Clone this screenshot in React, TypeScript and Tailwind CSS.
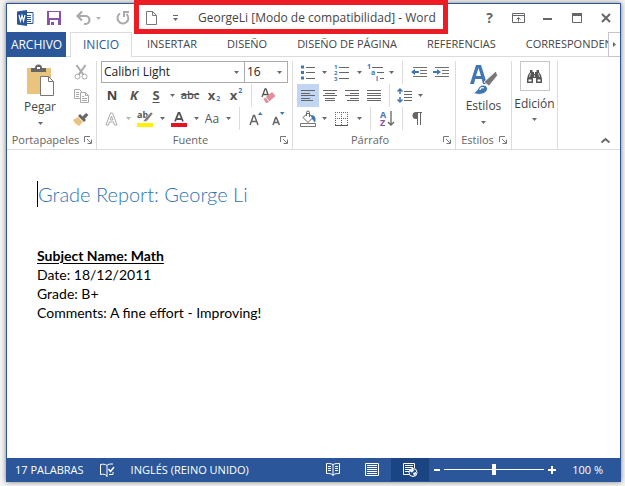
import React from "react";

type Kids = { children?: React.ReactNode };

function Svg({ w, h, children }: { w: number; h: number } & Kids) {
  return (
    <svg width={w} height={h} viewBox={`0 0 ${w} ${h}`} fill="none" aria-hidden="true" className="block shrink-0 overflow-visible">
      {children}
    </svg>
  );
}

function Caret({ className = "text-[#6a6a6a]" }: { className?: string }) {
  return (
    <span className={className}>
      <Svg w={5} h={3}>
        <path d="M0 0h5L2.500 3z" fill="currentColor" />
      </Svg>
    </span>
  );
}

function Tool({ label, className = "w-[22px]", children }: { label: string; className?: string } & Kids) {
  return (
    <button type="button" aria-label={label} title={label} className={`flex h-full shrink-0 items-center justify-center ${className}`}>
      {children}
    </button>
  );
}

function DropTool({ label, faded = false }: { label: string; faded?: boolean }) {
  return (
    <Tool label={label} className="w-[10px]">
      <Caret className={faded ? "text-[#b5b5b5]" : "text-[#6a6a6a]"} />
    </Tool>
  );
}

function Sep({ className = "w-2" }: { className?: string }) {
  return (
    <span className={`flex h-full shrink-0 justify-center ${className}`}>
      <span className="h-full w-px bg-[#dcdcdc]" />
    </span>
  );
}

function Row({ children }: Kids) {
  return <div className="flex h-[23px] items-center">{children}</div>;
}

function Launcher({ label }: { label: string }) {
  return (
    <button type="button" aria-label={label} className="shrink-0">
      <Svg w={8} h={8}>
        <path d="M.5 6V.5H6M3 3l4 4M7.500 3.500v4h-4" stroke="#777" />
      </Svg>
    </button>
  );
}

function Group({ title, className, launcher = true, children }: { title: string; className: string; launcher?: boolean } & Kids) {
  return (
    <section aria-label={title} className={`flex shrink-0 flex-col border-r border-[#dcdcdc] ${className}`}>
      <div className="h-[70px]">{children}</div>
      <div className="flex h-[18px] items-center pr-1">
        {launcher && (
          <>
            <h2 className="flex-1 text-center text-[11px] leading-4 text-[#666]">{title}</h2>
            <Launcher label={`Opciones de ${title}`} />
          </>
        )}
      </div>
    </section>
  );
}

function Bars({ rows }: { rows: [number, number][] }) {
  return (
    <Svg w={14} h={13}>
      {rows.map(([x, w], i) => (
        <path key={i} d={`M${x} ${[1, 4, 6, 9, 11][i] + 0.5}h${w}`} stroke="#666" />
      ))}
    </Svg>
  );
}

function IndentIcon({ out = false }: { out?: boolean }) {
  return (
    <Svg w={16} h={11}>
      <path d="M2 .5h14M9 3.500h7M9 6.500h7M2 9.500h14" stroke="#707070" />
      {out ? <path d="M0 5l4-3v2h4v2H4v2z" fill="#3f76b5" /> : <path d="M8 5L4 2v2H0v2h4v2z" fill="#3f76b5" />}
    </Svg>
  );
}

function TitleBar() {
  const control = "flex w-[29px] shrink-0 items-center justify-center";
  return (
    <header className="flex h-7 items-center text-[#666]">
      <div className="flex w-[139px] shrink-0 items-center pl-[10px]">
        <Svg w={17} h={16}>
          <path d="M9 2.500h7v11H9" fill="#fff" stroke="#2b579a" />
          <path d="M10 5.500h4M10 7.500h4M10 9.500h4M10 11.500h4" stroke="#2b579a" />
          <path d="M0 1.500L10 0v16L0 14.500z" fill="#2b579a" />
          <path d="M2 5l1.500 6L5 5.500 6.500 11 8 5" stroke="#fff" strokeWidth="1.200" />
        </Svg>
        <button type="button" aria-label="Guardar" className="ml-[13px]">
          <Svg w={14} h={14}>
            <path d="M0 0h14v14H0z" fill="#8a54a6" />
            <path d="M2 1h10v6H2zM3 9h8v5H3z" fill="#fff" />
            <path d="M4 11h3v3H4z" fill="#8a54a6" />
          </Svg>
        </button>
        <button type="button" aria-label="Deshacer" className="ml-[15px]">
          <Svg w={15} h={14}>
            <path d="M2 5h7.500a4 4 0 0 1 0 8H8" stroke="#aaa" strokeWidth="2.200" />
            <path d="M6 .5L1.500 5 6 9.500" stroke="#aaa" strokeWidth="2.200" />
          </Svg>
        </button>
        <button type="button" aria-label="Opciones de deshacer" className="ml-[5px]">
          <Caret className="text-[#b5b5b5]" />
        </button>
        <button type="button" aria-label="Rehacer" className="ml-[15px]">
          <Svg w={14} h={14}>
            <path d="M4 2.500A5.400 5.400 0 1 0 10.500 3" stroke="#aaa" strokeWidth="2" />
            <path d="M13 1H8v5" stroke="#aaa" strokeWidth="2" />
          </Svg>
        </button>
      </div>
      <button type="button" aria-label="Nuevo" className="shrink-0">
        <Svg w={12} h={14}>
          <path d="M.5.5h6l4 4v9H.5zM6.500.5v4h4" stroke="#777" fill="#fff" />
        </Svg>
      </button>
      <button type="button" aria-label="Personalizar barra" className="ml-[15px] flex shrink-0 flex-col items-center gap-[2px]">
        <span className="h-px w-[5px] bg-[#666]" />
        <Caret />
      </button>
      <h1 className="ml-5 min-w-0 flex-1 truncate text-[12px] leading-4 text-[#444]">GeorgeLi [Modo de compatibilidad] - Word</h1>
      <button type="button" aria-label="Ayuda" className={`text-[14px] leading-4 font-bold ${control}`}>?</button>
      <button type="button" aria-label="Opciones de presentación" className={control}>
        <Svg w={13} h={10}>
          <path d="M.5.5h12v9H.5zM.5 2.500h12M6.500 8.500V4.500M4.500 6.500l2-2 2 2" stroke="#666" />
        </Svg>
      </button>
      <button type="button" aria-label="Minimizar" className={control}>
        <Svg w={9} h={10}>
          <path d="M0 6h9" stroke="#666" strokeWidth="2" />
        </Svg>
      </button>
      <button type="button" aria-label="Maximizar" className={control}>
        <Svg w={10} h={10}>
          <path d="M.5 1v8.500h9V1" stroke="#666" />
          <path d="M0 1.500h10" stroke="#666" strokeWidth="3" />
        </Svg>
      </button>
      <button type="button" aria-label="Cerrar" className={control}>
        <Svg w={10} h={10}>
          <path d="M1 1l8 8M9 1L1 9" stroke="#666" strokeWidth="2" />
        </Svg>
      </button>
    </header>
  );
}

function Tabs() {
  const tab = "flex h-6 shrink-0 items-center text-[11px] leading-4 text-[#444]";
  return (
    <nav aria-label="Cinta" className="flex h-[25px] border-b border-[#dcdcdc]">
      <button type="button" className="flex h-[25px] w-[59px] shrink-0 items-center justify-center bg-[#2b579a] text-[12px] leading-4 text-white">ARCHIVO</button>
      <button type="button" className="ml-1 flex h-[25px] w-[62px] shrink-0 items-center justify-center border-x border-t border-[#dcdcdc] bg-white text-[12px] leading-4 text-[#2b579a]">
        INICIO
      </button>
      <div className="ml-[15px] flex min-w-0 flex-1 gap-[30px] overflow-hidden">
        <button type="button" className={tab}>INSERTAR</button>
        <button type="button" className={tab}>DISEÑO</button>
        <button type="button" className={tab}>DISEÑO DE PÁGINA</button>
        <button type="button" className={tab}>REFERENCIAS</button>
        <button type="button" className={tab}>CORRESPONDENCIA</button>
      </div>
      <button type="button" aria-label="Más pestañas" className="flex h-[25px] w-3 shrink-0 items-center justify-center border border-r-0 border-[#c6c6c6]">
        <Svg w={3} h={5}>
          <path d="M0 0v5l3-2.500z" fill="#666" />
        </Svg>
      </button>
    </nav>
  );
}

function Clipboard() {
  return (
    <Group title="Portapapeles" className="w-[90px]">
      <div className="flex">
        <button type="button" className="flex w-[66px] flex-col items-center pt-1 text-[12px] leading-4 text-[#444]">
          <Svg w={30} h={31}>
            <path d="M2 3h24v26H2z" fill="#e9c47e" />
            <path d="M6 3h4a3.500 3.500 0 0 1 7 0h4v4H6z" fill="#666" />
            <path d="M12 2h3v2h-3z" fill="#fff" />
            <path d="M15.500 11.500h8l5 5v14h-13z" fill="#fff" stroke="#777" />
            <path d="M23.500 11.500v5h5" stroke="#777" />
          </Svg>
          <span className="mt-[3px]">Pegar</span>
          <span className="mt-[7px]"><Caret /></span>
        </button>
        <div>
          <Row>
            <Tool label="Cortar" className="w-4">
              <Svg w={14} h={15}>
                <path d="M2.500 0L9.500 10M11.500 0L4.500 10" stroke="#aaa" strokeWidth="2" />
                <circle cx="3.500" cy="11.500" r="2.500" stroke="#aaa" />
                <circle cx="10.500" cy="11.500" r="2.500" stroke="#aaa" />
              </Svg>
            </Tool>
          </Row>
          <Row>
            <Tool label="Copiar" className="w-4">
              <Svg w={15} h={14}>
                <path d="M.5.5h5l2 2v7h-7zM2 3.500h3M2 5.500h3M2 7.500h3" stroke="#aaa" />
                <path d="M6.500 3.500h5l3 3v7h-8z" fill="#fff" stroke="#aaa" />
                <path d="M11.500 3.500v3h3M8 7.500h2M8 9.500h5M8 11.500h5" stroke="#aaa" />
              </Svg>
            </Tool>
          </Row>
          <Row>
            <Tool label="Copiar formato" className="w-4">
              <Svg w={16} h={14}>
                <path d="M0 8l5-3 5 5-4 4C4 13 1 11 0 8z" fill="#e9c47e" />
                <path d="M5 4l2-2 6 6-2 2z" fill="#666" />
                <path d="M9 5l4-4 2.500 2-4 4z" fill="#666" />
              </Svg>
            </Tool>
          </Row>
        </div>
      </div>
    </Group>
  );
}

function Font() {
  const select = "block h-5 w-full appearance-none bg-white pl-[2px] text-[12px] leading-4 text-[#222] outline-none";
  return (
    <Group title="Fuente" className="w-[196px] pl-1">
      <div className="mb-px flex h-[22px] w-[187px] border border-[#ababab]">
        <label className="relative flex-1">
          <select aria-label="Fuente" className={select}>
            <option>Calibri Light</option>
          </select>
          <span className="pointer-events-none absolute top-[9px] right-[5px]"><Caret /></span>
        </label>
        <label className="relative w-[43px] border-l border-[#ababab]">
          <select aria-label="Tamaño" className={select}>
            <option>16</option>
          </select>
          <span className="pointer-events-none absolute top-[9px] right-[5px]"><Caret /></span>
        </label>
      </div>
      <Row>
        <Tool label="Negrita"><b className="text-[13px] text-[#444]">N</b></Tool>
        <Tool label="Cursiva"><b className="text-[13px] text-[#555] italic">K</b></Tool>
        <Tool label="Subrayado"><b className="text-[13px] text-[#555] underline underline-offset-2">S</b></Tool>
        <DropTool label="Opciones de subrayado" />
        <Tool label="Tachado" className="w-[26px]"><span className="text-[11px] font-semibold text-[#555] line-through">abc</span></Tool>
        <Tool label="Subíndice">
          <b className="text-[13px] text-[#555]">x</b>
          <b className="mt-2 ml-px text-[7px] text-[#3f76b5]">2</b>
        </Tool>
        <Tool label="Superíndice">
          <b className="text-[13px] text-[#555]">x</b>
          <b className="mb-2 ml-px text-[7px] text-[#3f76b5]">2</b>
        </Tool>
        <Sep />
        <Tool label="Borrar formato" className="w-[26px]">
          <Svg w={15} h={15}>
            <path d="M1 9L4 1h1l3 8M2.500 6.500h4" stroke="#555" strokeWidth="1.300" />
            <path d="M2.500 11l8.500-7 3.500 4-8 7H5z" fill="#e58c9c" />
            <path d="M4.500 9l4 5" stroke="#fff" />
          </Svg>
        </Tool>
      </Row>
      <Row>
        <Tool label="Efectos de texto">
          <Svg w={14} h={14}>
            <path d="M1 13L5.500 1h2L12 13H9.500L8.500 10h-4l-1 3zM5.200 8h2.600L6.500 4z" stroke="#aaa" fill="#fff" />
          </Svg>
        </Tool>
        <DropTool label="Opciones de efectos" faded />
        <Tool label="Resaltado" className="w-[24px]">
          <Svg w={17} h={16}>
            <text x="0" y="7" fontSize="9" fontWeight="700" fill="#555">ab</text>
            <path d="M7 9l7-8 2 1.500-6 7.500-4 1z" fill="#777" stroke="#fff" strokeWidth=".6" />
            <path d="M0 12h16v4H0z" fill="#fff200" />
          </Svg>
        </Tool>
        <DropTool label="Color de resaltado" />
        <Tool label="Color de fuente" className="w-[24px]">
          <Svg w={16} h={16}>
            <path d="M4 10.500L7.500 2h1L12 10.500M5 8h6" stroke="#555" strokeWidth="1.800" />
            <path d="M0 12h16v4H0z" fill="#e81123" />
          </Svg>
        </Tool>
        <DropTool label="Opciones de color" />
        <Tool label="Cambiar mayúsculas"><span className="text-[12px] text-[#555]">Aa</span></Tool>
        <DropTool label="Opciones de mayúsculas" />
        <Sep className="w-3" />
        <Tool label="Agrandar fuente">
          <Svg w={14} h={14}>
            <path d="M1 13L4.500 3.500h1L9 13M2.500 9.500h5" stroke="#666" strokeWidth="1.500" />
            <path d="M9 3l2.200-3L13.500 3z" fill="#3f76b5" />
          </Svg>
        </Tool>
        <Tool label="Reducir fuente">
          <Svg w={13} h={14}>
            <path d="M1 13l2.700-7.500h.6L7.500 13M2 10.500h4.500" stroke="#666" strokeWidth="1.500" />
            <path d="M8 0h4.500L10.200 3z" fill="#3f76b5" />
          </Svg>
        </Tool>
      </Row>
    </Group>
  );
}

function Paragraph() {
  return (
    <Group title="Párrafo" className="w-[163px] pl-1">
      <Row>
        <Tool label="Viñetas">
          <Svg w={14} h={15}>
            <path d="M0 .5h3v3H0zM0 6h3v3H0zM0 11.500h3v3H0z" fill="#3f76b5" />
            <path d="M5 2.500h9M5 7.500h9M5 13.500h9" stroke="#666" />
          </Svg>
        </Tool>
        <DropTool label="Opciones de viñetas" />
        <Tool label="Numeración" className="w-[25px]">
          <Svg w={15} h={17}>
            <g fill="#3f76b5" fontSize="6" fontWeight="700">
              <text x="0" y="5">1</text>
              <text x="0" y="11">2</text>
              <text x="0" y="17">3</text>
            </g>
            <path d="M5 3.500h10M5 8.500h10M5 14.500h10" stroke="#666" />
          </Svg>
        </Tool>
        <DropTool label="Opciones de numeración" />
        <Tool label="Lista multinivel">
          <Svg w={17} h={17}>
            <g fill="#3f76b5" fontSize="7" fontWeight="700">
              <text x="0" y="5">1</text>
              <text x="4" y="11">a</text>
              <text x="9" y="17">i</text>
            </g>
            <path d="M5 3.500h11M10 8.500h7M13 14.500h4" stroke="#666" />
          </Svg>
        </Tool>
        <DropTool label="Opciones multinivel" />
        <Sep className="w-3" />
        <Tool label="Disminuir sangría"><IndentIcon out /></Tool>
        <Tool label="Aumentar sangría"><IndentIcon /></Tool>
      </Row>
      <Row>
        <Tool label="Alinear a la izquierda" className="w-[22px] bg-[#c2d5f2]">
          <Bars rows={[[0, 14], [0, 9], [0, 14], [0, 9], [0, 12]]} />
        </Tool>
        <Tool label="Centrar"><Bars rows={[[0, 14], [2, 10], [0, 14], [2, 10], [2, 10]]} /></Tool>
        <Tool label="Alinear a la derecha"><Bars rows={[[0, 14], [5, 9], [0, 14], [5, 9], [2, 12]]} /></Tool>
        <Tool label="Justificar"><Bars rows={[[0, 14], [0, 14], [0, 14], [0, 14], [0, 14]]} /></Tool>
        <Sep />
        <Tool label="Interlineado">
          <Svg w={15} h={15}>
            <path d="M3 1v5M3 9v5M.5 3.500L3 1l2.500 2.500M.5 11.500L3 14l2.500-2.500" stroke="#3f76b5" strokeWidth="1.500" />
            <path d="M7 3.500h8M7 6.500h8M7 9.500h8M7 12.500h8" stroke="#666" />
          </Svg>
        </Tool>
        <DropTool label="Opciones de interlineado" />
      </Row>
      <Row>
        <Tool label="Sombreado">
          <Svg w={17} h={16}>
            <path d="M3 6.500l5-4.500 5 4.500-5 5zM6.500 5V1.500a1.500 1.500 0 0 1 3 0V6" stroke="#666" fill="#fff" />
            <path d="M11 4c4 0 5.500 3 4 8-1-2-2-3-3-4z" fill="#3f76b5" />
            <path d="M.5 12.500h15v3H.5z" fill="#fff" stroke="#777" />
          </Svg>
        </Tool>
        <DropTool label="Opciones de sombreado" />
        <Tool label="Bordes" className="w-[25px]">
          <Svg w={14} h={14}>
            <path d="M0 .5h13M0 6.500h13M.5 0v13M6.500 0v13M12.500 0v13" stroke="#666" strokeDasharray="1 1" />
            <path d="M0 13.500h13" stroke="#555" />
          </Svg>
        </Tool>
        <DropTool label="Opciones de bordes" />
        <Sep className="w-3" />
        <Tool label="Ordenar">
          <Svg w={15} h={17}>
            <text x="0" y="8" fontSize="9" fontWeight="700" fill="#3f76b5">A</text>
            <text x="0" y="16" fontSize="9" fontWeight="700" fill="#8a54a6">Z</text>
            <path d="M11 1v14M8 12l3 3 3-3" stroke="#666" strokeWidth="1.300" />
          </Svg>
        </Tool>
        <Sep />
        <Tool label="Mostrar todo">
          <Svg w={10} h={13}>
            <path d="M4 0h6v1H9v12H8V1H6v12H5V7H4a3.500 3.500 0 0 1 0-7z" fill="#666" />
          </Svg>
        </Tool>
      </Row>
    </Group>
  );
}

function Ribbon() {
  return (
    <div className="flex h-[93px] border-b border-[#dcdcdc] pt-1">
      <Clipboard />
      <Font />
      <Paragraph />
      <Group title="Estilos" className="w-[56px]">
        <button type="button" className="flex w-full flex-col items-center pt-1 text-[12px] leading-4 text-[#444]">
          <Svg w={28} h={30}>
            <path d="M0 19L6 0h5l6 19h-4l-1.300-5H5.200L4 19zM6 11h5L8.500 3z" fill="#3f76b5" />
            <path d="M14 17L26 6l1.500 4.500L19 21z" fill="#777" stroke="#fff" strokeWidth=".8" />
            <path d="M3 28c5-1 5-8 10-8 4 0 6 4 3 7-3 3-9 3-13 1z" fill="#3f76b5" stroke="#fff" />
            <path d="M10 25c0-2 2-3 4-2" stroke="#fff" strokeWidth="1.300" />
          </Svg>
          <span className="mt-[3px]">Estilos</span>
          <span className="mt-[7px]"><Caret /></span>
        </button>
      </Group>
      <Group title="Edición" launcher={false} className="w-[46px]">
        <button type="button" className="flex w-full flex-col items-center text-[12px] leading-4 text-[#444]">
          <span className="flex h-[30px] w-[30px] items-center justify-center border border-[#c6c6c6]">
            <Svg w={15} h={13}>
              <path d="M3 0h2.500v2H7v2h1V2h1.500V0H12v2l2 3 1 4v4H9V8H6v5H0V9l1-4 2-3z" fill="#555" />
              <path d="M1.500 9.500h3v2h-3zM10.500 9.500h3v2h-3z" fill="#fff" />
              <path d="M3.500 3L2.500 7M11.500 3l1 4M7.500 5v2" stroke="#fff" strokeWidth=".7" />
            </Svg>
          </span>
          <span className="mt-[5px]">Edición</span>
          <span className="mt-[6px]"><Caret /></span>
        </button>
      </Group>
      <div className="flex flex-1 items-end justify-end pr-[10px] pb-[6px]">
        <button type="button" aria-label="Contraer la cinta">
          <Svg w={9} h={5}>
            <path d="M.5 4.500l4-3.500 4 3.500" stroke="#666" strokeWidth="1.800" />
          </Svg>
        </button>
      </div>
    </div>
  );
}

function StatusBar() {
  return (
    <footer className="flex h-[23px] items-center bg-[#2b579a] text-[11px] leading-4 text-white">
      <span className="ml-2 shrink-0">17 PALABRAS</span>
      <button type="button" aria-label="Revisión" className="ml-4 shrink-0">
        <Svg w={15} h={14}>
          <path d="M7 2.500C5 1 3 1 .5 1.500v10c2.500-.5 4.500-.5 6.500 1.500zM7 2.500C8 1 10 1 13 1M7 13v1M9 11.500h4V9" stroke="#fff" />
          <path d="M8.500 6l2 2.500L14 4" stroke="#fff" strokeWidth="1.500" />
        </Svg>
      </button>
      <span className="ml-4 min-w-0 flex-1 truncate">INGLÉS (REINO UNIDO)</span>
      <button type="button" aria-label="Modo de lectura" className="flex h-full w-[38px] shrink-0 items-center justify-center">
        <Svg w={14} h={13}>
          <path d="M7 1.500C5 .5 3 .5.500.5v10c2.500 0 4.500 0 6.500 1.500 2-1.500 4-1.500 6.500-1.500V.5C11 .5 9 .5 7 1.500zM7 1v12M2 3.500h3M2 5.500h3M2 7.500h3M9 3.500h3M9 5.500h3M9 7.500h3" stroke="#fff" />
        </Svg>
      </button>
      <button type="button" aria-label="Diseño de impresión" className="flex h-full w-[39px] shrink-0 items-center justify-center">
        <Svg w={14} h={13}>
          <path d="M.5.5h13v12H.5zM2 2.500h10M2 4.500h10M2 6.500h10M2 8.500h10M2 10.500h10" stroke="#fff" />
        </Svg>
      </button>
      <button type="button" aria-label="Diseño web" className="flex h-full w-[38px] shrink-0 items-center justify-center bg-[#1b4483]">
        <Svg w={15} h={14}>
          <path d="M6 11.500H.5V.5h11V5M2 2.500h8M2 4.500h8M2 6.500h5M2 8.500h4" stroke="#fff" />
          <circle cx="10" cy="9.500" r="4" stroke="#fff" fill="#1b4483" />
          <path d="M7 7l3-1.500 1 2L9 9.500 7.500 9zM10 10l3-1v2l-2 2z" fill="#fff" />
        </Svg>
      </button>
      <button type="button" aria-label="Alejar" className="ml-[5px] shrink-0">
        <Svg w={6} h={8}>
          <path d="M0 4h6" stroke="#fff" strokeWidth="2" />
        </Svg>
      </button>
      <input
        type="range"
        aria-label="Zoom"
        min={0}
        max={100}
        defaultValue={50}
        className="mx-1 h-3 w-[100px] shrink-0 appearance-none bg-transparent bg-[linear-gradient(#fff,#fff)] bg-[length:100%_1px] bg-center bg-no-repeat [&::-webkit-slider-thumb]:h-[11px] [&::-webkit-slider-thumb]:w-1 [&::-webkit-slider-thumb]:appearance-none [&::-webkit-slider-thumb]:bg-white"
      />
      <button type="button" aria-label="Acercar" className="shrink-0">
        <Svg w={8} h={8}>
          <path d="M0 4h8M4 0v8" stroke="#fff" strokeWidth="2" />
        </Svg>
      </button>
      <span className="mr-[17px] ml-4 shrink-0">100 %</span>
    </footer>
  );
}

export default function App() {
  return (
    <div className="relative flex min-h-screen flex-col bg-[#f4f4f4] pt-[3px] pr-1 pb-1 pl-[6px] font-['Open_Sans','Noto_Sans',sans-serif]">
      <div className="flex flex-1 flex-col border border-[#2b579a] bg-white shadow-[0_0_5px_rgba(0,0,0,0.5)]">
        <TitleBar />
        <Tabs />
        <Ribbon />
        <main className="flex-1 px-[30px] pt-[30px] font-[Lato,'Open_Sans',sans-serif] text-[14px] leading-[19px] text-black">
          <h2 className="flex h-[28px] items-center text-[20px] leading-6 font-light text-[#2e74b5]">
            <span className="h-[26px] w-px bg-black" />
            Grade Report: George Li
          </h2>
          <p className="mt-[38px] font-bold underline underline-offset-2">Subject Name: Math</p>
          <p>Date: 18/12/2011</p>
          <p>Grade: B+</p>
          <p>Comments: A fine effort - Improving!</p>
        </main>
        <StatusBar />
      </div>
      <div className="pointer-events-none absolute top-0 left-[134px] h-[34px] w-[314px] border-[5px] border-[#ed1c24]" />
    </div>
  );
}
